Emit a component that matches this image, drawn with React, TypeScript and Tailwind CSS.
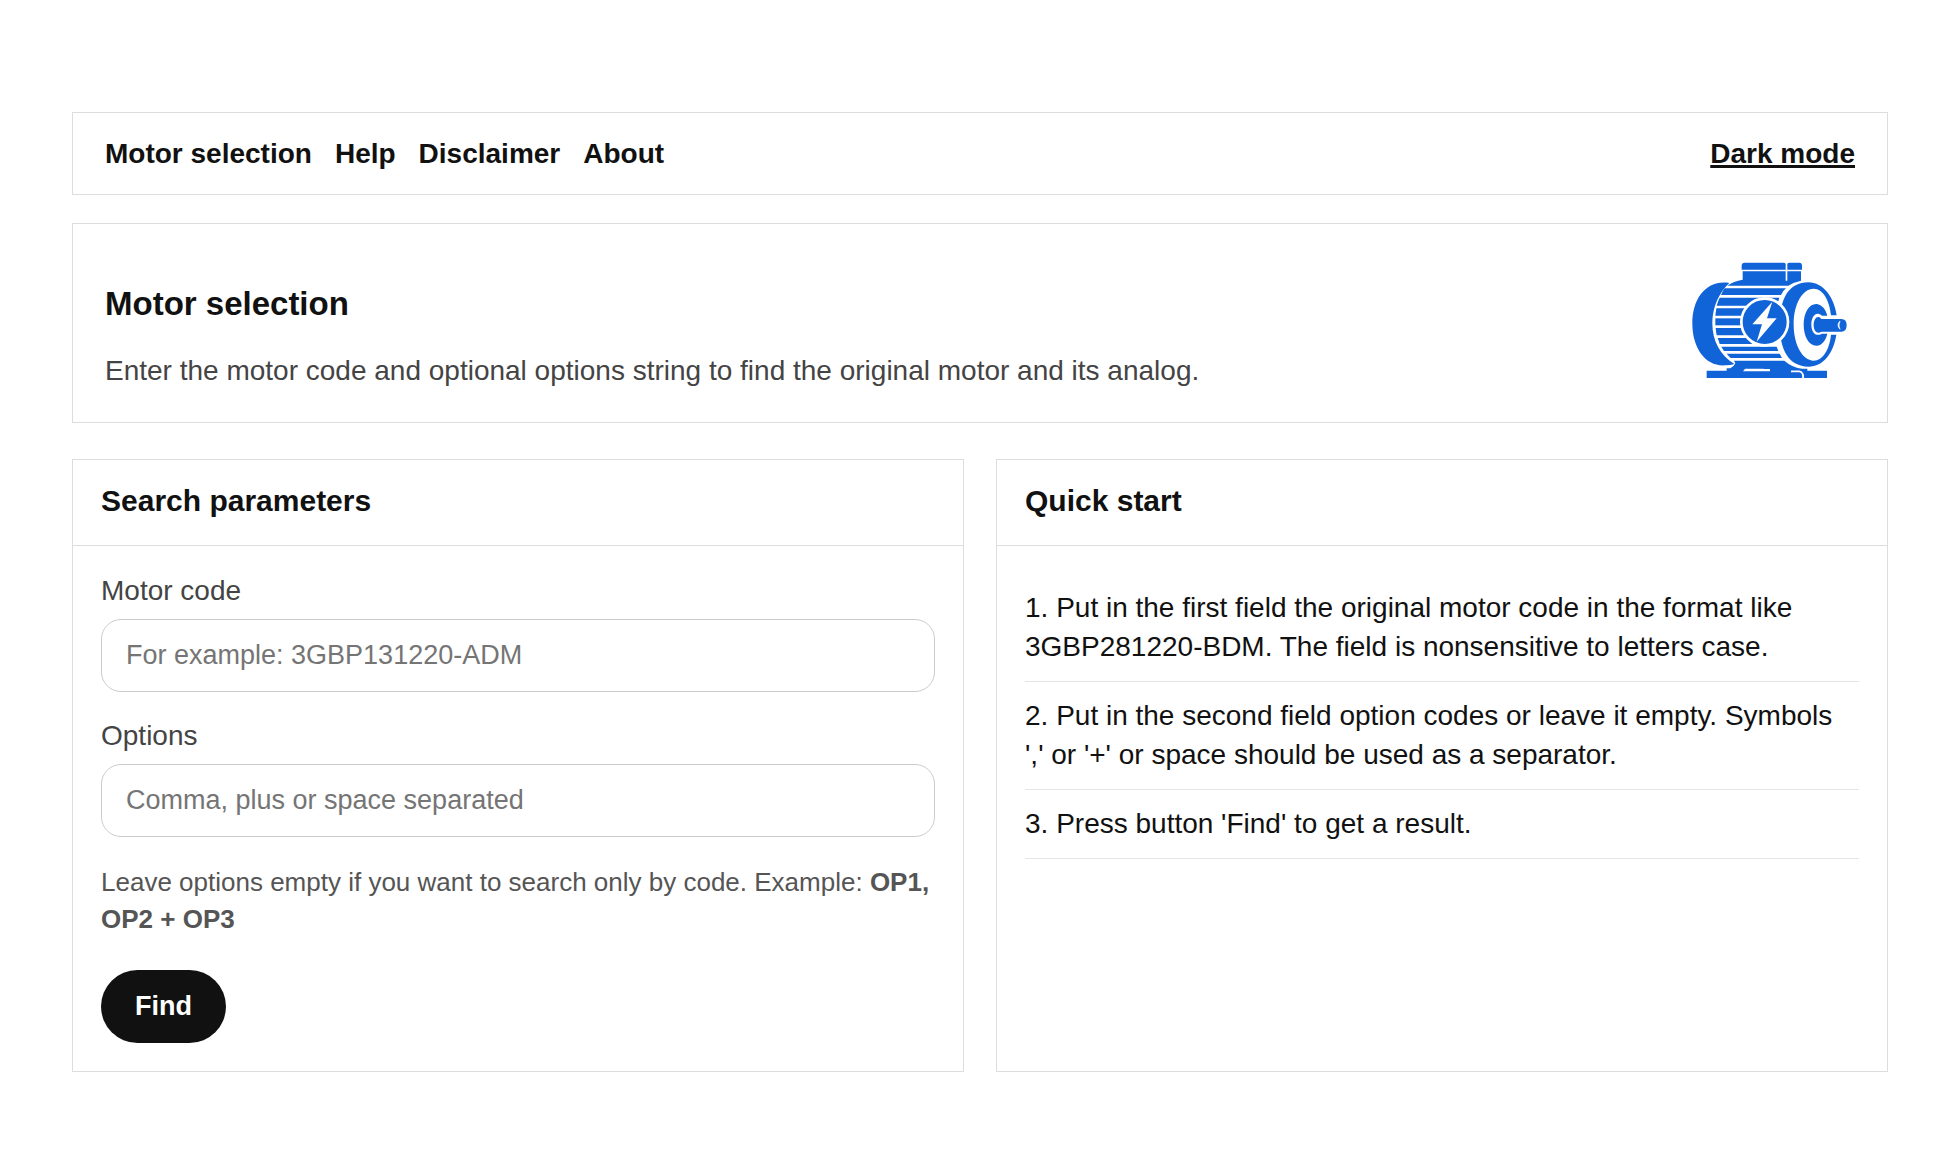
import type { ReactNode } from "react";

function MotorLogo() {
  return (
    <svg viewBox="15 18 510 402" className="h-[134px] w-[170px] shrink-0" role="img" aria-label="Electric motor">
      <g fill="#1163d8">
        <path d="M148 99C82 88 37 142 37 220C37 299 80 352 138 346Q152 346 163 342C121 316 97 274 97 220C97 174 115 130 148 99Z" />
        <path d="M185 47Q185 38 194 38H312Q317 38 317 43V59H185Z" />
        <path d="M322 43Q322 38 327 38H358Q366 38 366 47V59H322Z" />
        <path d="M188 64H317V92H322V64H363V92Q340 97 325 107H142Q160 94 188 89Z" />
        <path d="M134 115H318Q309 122 303 135H123Q127 124 134 115Z" />
        <path d="M119 143H298L295 153H285Q255 140 222 153L208 167H110Q114 153 119 143Z" />
        <path d="M109 175H197Q190 186 187 197H106Z" />
        <path d="M106 205H184V226H106Z" />
        <path d="M107 234H185Q187 246 193 256H110Q108 245 107 234Z" />
        <path d="M113 264H200Q207 272 217 282H119Q116 272 113 264Z" />
        <path d="M124 290H290L295 303H132Q128 297 124 290Z" />
        <path d="M140 311H299L306 324H152Q145 317 140 311Z" />
        <path d="M162 332H313Q337 353 367 356H382V362H441V384H371Q372 366 358 365H192L198 358H251V356H195L189 364H358Q368 366 367 384H80V362H140V355H151Q162 350 166 340Z" />
        <path fillRule="evenodd" d="M385 97C430 97 463 143 470 196H453C449 152 429 116 401 116C367 116 341 162 341 223C341 284 367 332 401 332C429 332 449 296 453 254H469C461 307 431 350 385 350C327 350 299 300 299 223C299 146 327 97 385 97Z" />
        <path d="M410 162C426 164 438 179 442 197H426C406 181 394 202 394 224C394 246 407 262 426 251H442C438 270 426 286 410 287C387 288 371 259 371 224C371 188 387 161 410 162Z" />
        <path d="M424 207H484Q500 207 500 225Q500 245 484 245H424C413 253 401 245 401 225C401 205 414 193 424 207Z" />
      </g>
      <circle cx="254" cy="216" r="70" fill="#1163d8" stroke="white" strokeWidth="8" />
      <path d="M277 155L217 223H246L230 275L290 205H261Z" fill="white" />
      <path d="M480 213Q468 225 480 238Q474 225 480 213Z" fill="white" stroke="white" strokeWidth="2" />
      <path d="M192 364L198 357H270V364Z" fill="white" />
      <path d="M333 364H358Q370 366 370 384" fill="none" stroke="white" strokeWidth="5" />
    </svg>
  );
}

function Panel({ title, children }: { title: string; children: ReactNode }) {
  return (
    <section className="border border-[#dddddd]">
      <h2 className="border-b border-[#dddddd] px-7 pt-[23px] pb-[26px] text-[30px] leading-9 font-bold">{title}</h2>
      <div className="p-7">{children}</div>
    </section>
  );
}

function Field({ id, label, placeholder }: { id: string; label: string; placeholder: string }) {
  return (
    <div className="mb-[27px] flex flex-col gap-[11px]">
      <label htmlFor={id} className="leading-[34px] text-[#444444]">
        {label}
      </label>
      <input
        id={id}
        type="text"
        placeholder={placeholder}
        className="h-[73px] w-full rounded-[20px] border border-[#cccccc] bg-white px-6 text-[27px] leading-8 placeholder:text-[#757575]"
      />
    </div>
  );
}

const links = ["Motor selection", "Help", "Disclaimer", "About"];

const steps = [
  "1. Put in the first field the original motor code in the format like 3GBP281220-BDM. The field is nonsensitive to letters case.",
  "2. Put in the second field option codes or leave it empty. Symbols ',' or '+' or space should be used as a separator.",
  "3. Press button 'Find' to get a result.",
];

export default function App() {
  return (
    <div className="min-h-screen bg-white px-[72px] py-28 font-['Liberation_Sans',Arial,sans-serif] text-[28px] leading-[39px] text-[#111111]">
      <header className="flex items-center justify-between border border-[#dddddd] px-8 py-[21px] font-bold">
        <nav className="flex gap-[23px]">
          {links.map((link) => (
            <a key={link} href="#">
              {link}
            </a>
          ))}
        </nav>
        <a href="#" className="underline decoration-[3px] underline-offset-2">
          Dark mode
        </a>
      </header>

      <section className="mt-7 flex items-end justify-between border border-[#dddddd] p-8">
        <div className="flex flex-col gap-7">
          <h1 className="text-[33px] leading-[38px] font-bold">Motor selection</h1>
          <p className="text-[#444444]">
            Enter the motor code and optional options string to find the original motor and its analog.
          </p>
        </div>
        <MotorLogo />
      </section>

      <main className="mt-9 grid grid-cols-2 gap-8">
        <Panel title="Search parameters">
          <form onSubmit={(event) => event.preventDefault()}>
            <Field id="motor-code" label="Motor code" placeholder="For example: 3GBP131220-ADM" />
            <Field id="options" label="Options" placeholder="Comma, plus or space separated" />
            <p className="mb-8 text-[26px] leading-[37px] text-[#555555]">
              Leave options empty if you want to search only by code. Example: <strong>OP1, OP2 + OP3</strong>
            </p>
            <button
              type="submit"
              className="block h-[73px] rounded-full bg-[#111111] px-[34px] text-[27px] font-bold text-white"
            >
              Find
            </button>
          </form>
        </Panel>
        <Panel title="Quick start">
          <ul>
            {steps.map((step) => (
              <li key={step} className="border-b border-[#e5e5e5] pt-3.5 pr-1 pb-[15px]">
                {step}
              </li>
            ))}
          </ul>
        </Panel>
      </main>
    </div>
  );
}
